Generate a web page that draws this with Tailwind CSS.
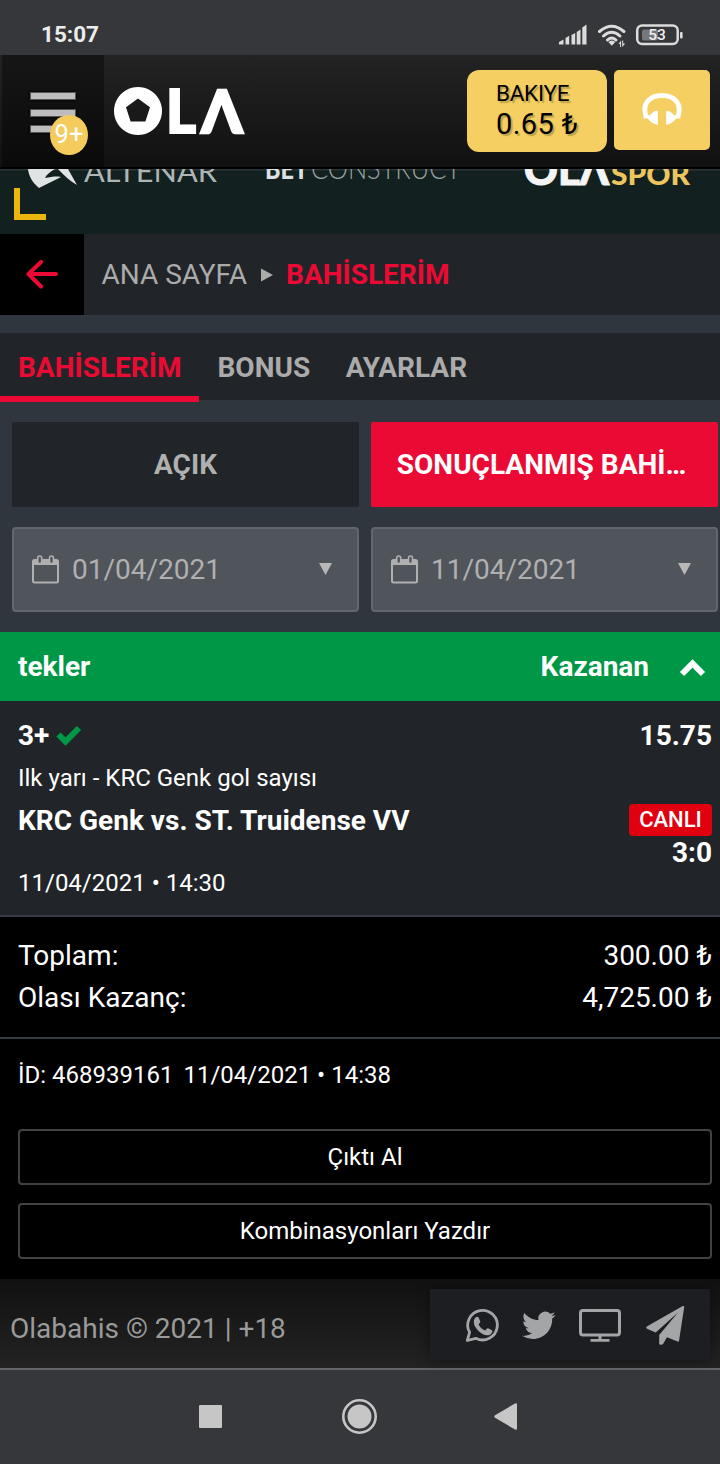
<!DOCTYPE html>
<html lang="tr">
<head>
<meta charset="utf-8">
<title>Bahislerim</title>
<script src="https://cdn.jsdelivr.net/npm/@tailwindcss/browser@4"></script>
</head>
<body class="w-[720px] h-[1464px] overflow-hidden bg-[#30363d] font-['Roboto',sans-serif] text-[28px] leading-[42px] text-white">

<!-- status bar -->
<div class="flex h-[55px] items-center justify-between bg-[#36373b] pl-[41px] pr-[36px] pt-[15px] text-[#ececec]">
  <span class="pb-px text-[22.500px] font-bold leading-none">15:07</span>
  <svg width="126" height="24" viewBox="558 23 126 24" fill="#dcdcdc">
    <path d="M559 44.500v-2.500l4.500-2.500v5zM565.500 38l3.700-2.200v8.700h-3.700zM571.500 35l3.700-2v11.500h-3.700zM576.700 32l3.800-2.500v15h-3.800zM582.300 27.500l4.200-3v20h-4.200z" />
    <g fill="none" stroke="#dcdcdc" stroke-width="3" stroke-linecap="round"><path d="M599.500 31.500q12.200-10.500 24.400 0M603.500 36q8.200-7.500 16.400 0M607.500 40q4.200-4 8.400 0"/></g>
    <path d="M608.300 42q3.500-3.200 7 0l-3.500 3.800zM618.500 44l2.600-3.500V47h-1v-3zM622.200 40.500h1V43.500h2l-3 3.500z"/>
    <rect x="637.200" y="25.500" width="40.500" height="18.500" rx="5" fill="none" stroke="#dcdcdc" stroke-width="2.500"/>
    <rect x="642" y="29.500" width="16" height="11" rx="2" fill="#77787b"/>
    <rect x="680" y="32" width="2.600" height="6.500" rx="1"/>
    <text x="657" y="40.200" text-anchor="middle" font-family="Roboto" font-weight="500" font-size="15.500" fill="#efefef">53</text>
  </svg>
</div>

<!-- header -->
<header class="flex h-[114px] items-start border-b-2 border-black bg-linear-to-b from-[#232323] to-[#111111] pr-[10px]">
  <div class="relative ml-[2px] h-[112px] w-[102px] bg-linear-to-b from-[#161616] to-[#0a0a0a]">
    <div class="flex flex-col gap-[8.500px] pl-[28px] pt-[37px]">
      <div class="h-[8px] w-[46px] border border-[#555] bg-[#bdbdbd] shadow-[0_0_3px_#000]"></div>
      <div class="h-[8px] w-[46px] border border-[#555] bg-[#bdbdbd] shadow-[0_0_3px_#000]"></div>
      <div class="h-[8px] w-[46px] border border-[#555] bg-[#bdbdbd] shadow-[0_0_3px_#000]"></div>
    </div>
    <div class="absolute left-[48px] top-[60px] flex h-[40px] w-[38px] items-center justify-center rounded-[50%] bg-[#f5cb5e] pb-px text-[25.500px] leading-none">9+</div>
  </div>
  <svg class="ml-[8px] mt-[25px] overflow-visible" width="140" height="62" viewBox="112 80 140 62" fill="#fff">
    <path fill-rule="evenodd" d="M138 87a24 24 0 1 0 .01 0zM138 98.500l12 8.700-4.600 14.300h-14.800L126 107.200z"/>
    <text x="166" y="132.800" font-family="Lato" font-weight="900" font-size="60" textLength="30" lengthAdjust="spacingAndGlyphs" stroke="#fff" stroke-width="2">L</text>
    <text x="201.500" y="132.600" font-family="Lato, Inter" font-weight="900" font-size="59.500" textLength="41" lengthAdjust="spacingAndGlyphs" stroke="#fff" stroke-width="2.600">Λ</text>
  </svg>
  <div class="ml-auto mt-[15px] flex h-[82px] w-[140px] flex-col justify-center rounded-[12px] bg-[#f5cf61] pl-[29px] text-black [text-shadow:2px_2px_1px_rgba(0,0,0,.22)]">
    <div class="h-[28px] whitespace-nowrap text-[22.500px] leading-[26px] tracking-[-0.300px]">BAKIYE</div>
    <div class="h-[34px] whitespace-nowrap text-[29px] leading-[32px] tracking-[0.400px]">0.65 ₺</div>
  </div>
  <div class="ml-[7px] mt-[15px] flex h-[80px] w-[96px] items-center justify-center rounded-[5px] bg-[#f5cf61]">
    <svg width="40" height="36" viewBox="642 91 40 36">
      <path d="M645.800 114c-4-12 4.500-19.500 16.200-19.500s20.200 7.500 16.200 19.500" fill="none" stroke="#fff" stroke-width="4.800"/>
      <path d="M643.600 111v6.500h4q4 5 10.200 6.500V110q-3.500-1-6 2.500l-2.500 2zM680.400 111v6.500h-4q-4 5-10.200 6.500V110q3.500-1 6 2.500l2.500 2z" fill="#fff"/>
    </svg>
  </div>
</header>

<!-- provider logos strip -->
<svg class="block bg-[#12201f]" width="720" height="65" viewBox="0 169 720 65">
  <rect x="0" y="169" width="720" height="1.500" fill="#2a3638"/>
  <path d="M28 169h27c-5 3-8 5-10 9 6-1 11-2 16-1-7 4-15 7-22 11-6-5-10-11-11-19zM58 169h10l9 16q-9-5-19-16z" fill="#dfe3e3"/>
  <g font-family="Lato" font-size="29">
    <text x="84" y="181.500" fill="#aeb5b5" textLength="133" lengthAdjust="spacingAndGlyphs">ALTENAR</text>
    <text x="265" y="179.300" fill="#dde1e1" font-weight="900" textLength="43" lengthAdjust="spacingAndGlyphs">BET</text>
    <text x="311" y="179.300" fill="#9aa2a1" font-weight="300" textLength="150" lengthAdjust="spacingAndGlyphs">CONSTRUCT</text>
  </g>
  <g font-family="Lato" font-weight="900">
    <text x="524" y="184.500" font-size="42" fill="#f4f4f4" stroke="#f4f4f4" textLength="85" lengthAdjust="spacingAndGlyphs">OLΛ</text>
    <text x="611" y="184.500" font-size="28" fill="#edc55f" textLength="79" lengthAdjust="spacingAndGlyphs">SPOR</text>
  </g>
  <path d="M14 188h6v26h26v6H14z" fill="#edb60f"/>
</svg>

<!-- breadcrumb -->
<div class="flex h-[81px] items-center bg-[#212529]">
  <div class="flex h-[81px] w-[84px] items-center justify-center bg-black">
    <svg width="34" height="30" viewBox="0 0 34 30" fill="none" stroke="#eb0a33" stroke-width="4" stroke-linecap="round" stroke-linejoin="round"><path d="M31 14H3.500M16 2L3.500 14L16 26.500"/></svg>
  </div>
  <span class="ml-[17.500px] text-[#ababab]">ANA SAYFA</span>
  <svg class="ml-[13.500px]" width="12" height="14"><path d="M0 .5l12 6.500-12 6.500z" fill="#ababab"/></svg>
  <span class="ml-[13.500px] font-bold text-[#eb0a33]">BAHİSLERİM</span>
</div>

<!-- tabs -->
<div class="mt-[18px] flex h-[67px] items-center bg-[#212529] font-bold text-[#ababab]">
  <div class="relative flex h-[67px] w-[199px] items-center pl-[18px] pt-[2px] text-[#eb0a33]">BAHİSLERİM
    <div class="absolute left-0 top-[63px] h-[6px] w-[199px] bg-[#eb0a33]"></div>
  </div>
  <div class="pl-[18.500px] pt-[2px]">BONUS</div>
  <div class="pl-[35.500px] pt-[2px]">AYARLAR</div>
</div>

<!-- filters -->
<div class="grid grid-cols-[347px_347px] gap-x-[12px] gap-y-[20px] pl-[12px] pt-[22px] text-[#b0b0b0]">
  <div class="flex h-[85px] items-center justify-center rounded-[2px] bg-[#212529] font-bold">AÇIK</div>
  <div class="flex h-[85px] items-center justify-center rounded-[2px] bg-[#eb0a33] pr-[6px] font-bold text-white">SONUÇLANMIŞ BAHİ…</div>
  <div class="flex h-[85px] items-center rounded-[4px] border-2 border-[#62666e] bg-[#50545b] pl-[18px] pr-[25px]">
    <svg width="27" height="29" viewBox="0 0 27 29"><rect x="1" y="5" width="25" height="22.500" rx="1.500" fill="none" stroke="#b0b0b0" stroke-width="2"/><path d="M1 5h25v5H1z" fill="#b0b0b0"/><rect x="5.700" y="1" width="4" height="7.500" rx="2" fill="#50545b" stroke="#b0b0b0" stroke-width="1.600"/><rect x="17.500" y="1" width="4" height="7.500" rx="2" fill="#50545b" stroke="#b0b0b0" stroke-width="1.600"/></svg>
    <span class="ml-[13px]">01/04/2021</span>
    <svg class="mb-px ml-auto" width="13" height="12"><path d="M0 0h13L6.500 12z" fill="#b8b8b8"/></svg>
  </div>
  <div class="flex h-[85px] items-center rounded-[4px] border-2 border-[#62666e] bg-[#50545b] pl-[18px] pr-[25px]">
    <svg width="27" height="29" viewBox="0 0 27 29"><rect x="1" y="5" width="25" height="22.500" rx="1.500" fill="none" stroke="#b0b0b0" stroke-width="2"/><path d="M1 5h25v5H1z" fill="#b0b0b0"/><rect x="5.700" y="1" width="4" height="7.500" rx="2" fill="#50545b" stroke="#b0b0b0" stroke-width="1.600"/><rect x="17.500" y="1" width="4" height="7.500" rx="2" fill="#50545b" stroke="#b0b0b0" stroke-width="1.600"/></svg>
    <span class="ml-[13px]">11/04/2021</span>
    <svg class="mb-px ml-auto" width="13" height="12"><path d="M0 0h13L6.500 12z" fill="#b8b8b8"/></svg>
  </div>
</div>

<!-- bet slip header -->
<div class="mt-[20px] flex h-[69px] items-center bg-[#009846] pl-[18px] pr-[13px] font-bold">
  <span>tekler</span>
  <span class="ml-auto">Kazanan</span>
  <svg class="ml-[30px] mt-[3px]" width="28" height="18"><path d="M3 15L13.500 4.500 24 15" fill="none" stroke="#fff" stroke-width="6"/></svg>
</div>

<!-- match -->
<div class="flex h-[216px] justify-between border-b-2 border-[#343a40] bg-[#212529] pl-[18px] pr-[8px] pt-[14px]">
  <div class="flex flex-col">
    <div class="flex h-[42px] items-center font-bold">3+
      <svg class="ml-[7px] mb-px" width="26" height="21"><path d="M2.500 9.500L9.500 16.500 23 3" fill="none" stroke="#009846" stroke-width="6"/></svg>
    </div>
    <div class="h-[43px] text-[24px]">Ilk yarı - KRC Genk gol sayısı</div>
    <div class="h-[42px] font-bold">KRC Genk vs. ST. Truidense VV</div>
    <div class="mt-[20px] h-[42px] text-[24px]">11/04/2021 • 14:30</div>
  </div>
  <div class="flex flex-col items-end font-bold">
    <div class="h-[42px]">15.75</div>
    <div class="mt-[47px] flex h-[32px] w-[83px] items-center justify-center rounded-[4px] bg-[#e1000f] text-[22px] font-medium leading-none">CANLI</div>
    <div class="-mt-[4px] h-[42px]">3:0</div>
  </div>
</div>

<!-- totals -->
<div class="h-[122px] border-b-2 border-[#343a40] bg-black pl-[18px] pr-[8px] pt-[18px]">
  <div class="flex justify-between"><span>Toplam:</span><span>300.00 ₺</span></div>
  <div class="flex justify-between"><span>Olası Kazanç:</span><span>4,725.00 ₺</span></div>
</div>

<!-- slip actions -->
<div class="h-[240px] bg-black pl-[18px] pr-[8px] pt-[15px] text-[24px]">
  <div class="flex h-[42px] gap-[10px] whitespace-nowrap"><span>İD: 468939161</span><span>11/04/2021 • 14:38</span></div>
  <div class="mt-[33px] flex h-[56px] items-center justify-center rounded-[4px] border-2 border-[#424242]">Çıktı Al</div>
  <div class="mt-[18px] flex h-[56px] items-center justify-center rounded-[4px] border-2 border-[#424242]">Kombinasyonları Yazdır</div>
</div>

<!-- footer -->
<footer class="flex h-[91px] items-start justify-between border-b-2 border-[#65666a] bg-linear-to-b from-[#111111] to-[#232323] pl-[10px] pr-[10px] text-[#9a9a9a]">
  <span class="mt-[29px]">Olabahis © 2021 | +18</span>
  <div class="mt-[10px] h-[71px] w-[280px] bg-[#1d1e22] shadow-[0_0_12px_rgba(0,0,0,.45)]">
    <svg width="280" height="71" viewBox="430 1289 280 71" fill="#a4a5a7">
      <path d="M467.300 1340.500l2.300-8.200A14.800 14.800 0 1 1 475.800 1338.300z" fill="none" stroke="#a4a5a7" stroke-width="2.800" stroke-linejoin="round"/>
      <path d="M475.600 1317.500c1-1 2.600-.9 3.100.2l1.500 3.500c.5 1.200-1.300 2.500-1.600 3.200 1.500 3 3.700 4.900 6.500 6.100.9-.5 1.900-2.600 3-2.200l3.800 1.900c1.300.8-.4 3.800-2 4.500-3.800 1.700-8.500-.8-11.400-3.700-2.700-2.800-5-6-4.700-9.500.1-1.700.8-3 1.800-4z"/>
      <path transform="translate(522 1308.500) scale(1.400)" d="M23.953 4.570a10 10 0 01-2.825.775 4.958 4.958 0 002.163-2.723c-.951.555-2.005.959-3.127 1.184a4.920 4.920 0 00-8.384 4.482C7.690 8.095 4.067 6.130 1.640 3.162a4.822 4.822 0 00-.666 2.475c0 1.710.870 3.213 2.188 4.096a4.904 4.904 0 01-2.228-.616v.060a4.923 4.923 0 003.946 4.827 4.996 4.996 0 01-2.212.085 4.936 4.936 0 004.604 3.417 9.867 9.867 0 01-6.102 2.105c-.390 0-.779-.023-1.170-.067a13.995 13.995 0 007.557 2.209c9.053 0 13.998-7.496 13.998-13.985 0-.210 0-.420-.015-.630A9.935 9.935 0 0024 4.590z"/>
      <rect x="580.500" y="1310.500" width="39" height="24.500" rx="2.500" fill="none" stroke="#a4a5a7" stroke-width="3"/>
      <path d="M598.500 1336h3v3h8v2.700h-19v-2.700h8z"/>
      <path d="M684.300 1306.500l-5.300 34.500q-.4 1-1.400.6l-10.600-4.300-4 6.700q-1.500 1.700-3.800-.1v-8.800l18.800-22.600-22.300 20-8.700-3.800q-1.700-.9-.2-2.200l35.500-20.200q1.600-.8 2 .2z"/>
    </svg>
  </div>
</footer>

<!-- system navigation -->
<nav class="h-[94px] bg-[#36373b]">
  <svg class="block" width="720" height="94" viewBox="0 1370 720 94" fill="#c6c6c6">
    <rect x="199" y="1405" width="23" height="23" rx="1"/>
    <circle cx="359.500" cy="1416.500" r="16.200" fill="none" stroke="#c6c6c6" stroke-width="2.600"/>
    <circle cx="359.500" cy="1416.500" r="12"/>
    <path d="M517 1404.500v24q0 2-2 1l-20-11.700q-1.500-1.300 0-2.600l20-11.700q2-1 2 1z"/>
  </svg>
</nav>
</body>
</html>
